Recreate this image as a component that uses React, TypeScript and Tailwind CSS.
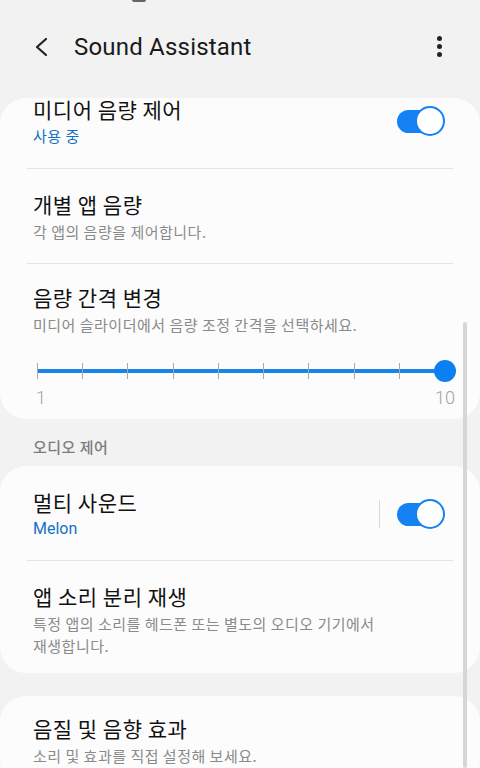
import React from "react";

const KR = {
  fontFamily: '"Noto Sans CJK KR", "Noto Sans", Roboto, sans-serif',
};

function Toggle() {
  return (
    <div className="relative h-[30px] w-[48px] shrink-0">
      <div className="absolute left-0 top-[4px] h-[23px] w-[44px] rounded-full bg-[#1482f2]" />
      <div className="absolute right-0 top-0 h-[30px] w-[30px] rounded-full border-2 border-[#1482f2] bg-white" />
    </div>
  );
}

function Divider() {
  return <div className="mx-[27px] h-px bg-[#e4e4e4]" />;
}

function Title({ children }: { children: React.ReactNode }) {
  return (
    <p className="text-[21px] leading-[28px] tracking-[0.5px] text-[#111]">
      {children}
    </p>
  );
}

function Sub({ children }: { children: React.ReactNode }) {
  return (
    <p className="mt-[3px] text-[15px] leading-[22px] tracking-[0.5px] text-[#8a8a8a]">
      {children}
    </p>
  );
}

function Slider() {
  const ticks = Array.from({ length: 10 });
  return (
    <div className="mt-[23px] px-[37px] pr-[35px]">
      <div className="relative h-[24px]">
        <div className="absolute left-0 right-0 top-[10px] h-[4px] bg-[#1a83ea]" />
        <div className="absolute inset-0 flex items-center justify-between">
          {ticks.map((_, i) => (
            <div key={i} className="h-[16px] w-px bg-[#a9a9a9]" />
          ))}
        </div>
        <div className="absolute right-[-11px] top-[1px] h-[22px] w-[22px] rounded-full bg-[#0b80f2]" />
      </div>
      <div
        className="mt-[4px] flex justify-between text-[18px] font-light leading-[22px] text-[#a3a3a3]"
        style={{ fontFamily: "Roboto, sans-serif" }}
      >
        <span className="-ml-[1px]">1</span>
        <span className="-mr-[10px]">10</span>
      </div>
    </div>
  );
}

export default function App() {
  return (
    <div
      className="relative h-[768px] w-[480px] overflow-hidden bg-[#f2f2f2]"
      style={KR}
    >
      {/* status bar remnant */}
      <div className="absolute left-[132px] top-0 h-[2px] w-[14px] rounded-b bg-[#666]" />

      {/* header */}
      <div className="flex h-[98px] items-start pt-[33px]">
        <svg
          className="ml-[33px] mt-[3px]"
          width="18"
          height="22"
          viewBox="0 0 18 22"
          fill="none"
          stroke="#222"
          strokeWidth="2.2"
          strokeLinecap="round"
          strokeLinejoin="round"
        >
          <path d="M13 3 L4 11 L13 19" />
        </svg>
        <h1
          className="ml-[23px] text-[24px] leading-[28px] tracking-[0.2px] text-[#1a1a1a]"
          style={{ fontFamily: "Roboto, sans-serif" }}
        >
          Sound Assistant
        </h1>
        <div className="ml-auto mr-[38px] mt-[3px] flex flex-col gap-[3px]">
          <span className="h-[5px] w-[5px] rounded-full bg-[#222]" />
          <span className="h-[5px] w-[5px] rounded-full bg-[#222]" />
          <span className="h-[5px] w-[5px] rounded-full bg-[#222]" />
        </div>
      </div>

      {/* list */}
      <div className="flex flex-col">
        <section className="overflow-hidden rounded-[26px] bg-[#fcfcfc]">
          <div className="-mt-[3px] flex items-center pb-[21px] pl-[33px] pr-[35px]">
            <div className="flex-1">
              <Title>미디어 음량 제어</Title>
              <p className="mt-[2px] text-[15px] leading-[22px] tracking-[0.5px] text-[#1570c4]">
                사용 중
              </p>
            </div>
            <Toggle />
          </div>
          <Divider />
          <div className="px-[33px] pb-[20px] pt-[21px]">
            <Title>개별 앱 음량</Title>
            <Sub>각 앱의 음량을 제어합니다.</Sub>
          </div>
          <Divider />
          <div className="pb-[10px] pt-[19px]">
            <div className="px-[33px]">
              <Title>음량 간격 변경</Title>
              <Sub>미디어 슬라이더에서 음량 조정 간격을 선택하세요.</Sub>
            </div>
            <Slider />
          </div>
        </section>

        <p className="px-[33px] pb-[9px] pt-[18px] text-[15px] font-medium leading-[20px] tracking-[0.5px] text-[#7c7c7c]">
          오디오 제어
        </p>

        <section className="overflow-hidden rounded-[26px] bg-[#fcfcfc]">
          <div className="flex items-center pb-[20px] pl-[33px] pr-[35px] pt-[22px]">
            <div className="flex-1">
              <Title>멀티 사운드</Title>
              <p
                className="mt-[2px] text-[16px] leading-[22px] text-[#1570c4]"
                style={{ fontFamily: "Roboto, sans-serif" }}
              >
                Melon
              </p>
            </div>
            <div className="mr-[17px] h-[28px] w-px bg-[#d9d9d9]" />
            <Toggle />
          </div>
          <Divider />
          <div className="px-[33px] pb-[16px] pt-[21px]">
            <Title>앱 소리 분리 재생</Title>
            <Sub>
              특정 앱의 소리를 헤드폰 또는 별도의 오디오 기기에서
              <br />
              재생합니다.
            </Sub>
          </div>
        </section>

        <section className="mt-[23px] overflow-hidden rounded-[26px] bg-[#fcfcfc]">
          <div className="px-[33px] pb-[20px] pt-[18px]">
            <Title>음질 및 음향 효과</Title>
            <Sub>소리 및 효과를 직접 설정해 보세요.</Sub>
          </div>
        </section>
      </div>

      {/* scrollbar */}
      <div className="absolute bottom-0 right-[13px] top-[322px] w-[4px] rounded-full bg-[#d6d6d6]" />
    </div>
  );
}
